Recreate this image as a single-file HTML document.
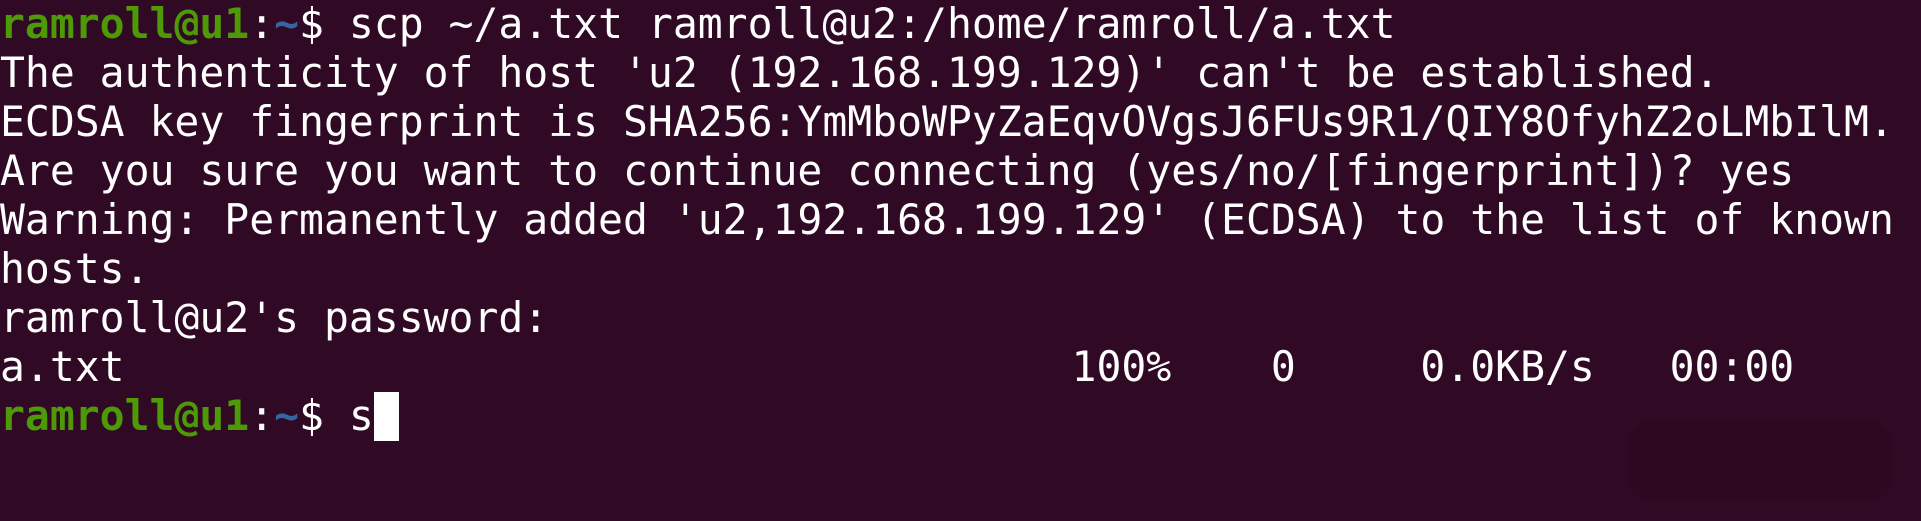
<!DOCTYPE html>
<html><head><meta charset="utf-8"><style>
html,body{margin:0;padding:0;background:#300a24;width:1921px;height:521px;overflow:hidden}
pre{margin:0;padding:0;font-family:"DejaVu Sans Mono","Liberation Mono",monospace;font-size:41.4px;line-height:49px;color:#ffffff;white-space:pre}
.g{color:#4e9a06;font-weight:bold}
.b{color:#3465a4;font-weight:bold}
.cur{display:inline-block;width:25px;height:49px;background:#fff;vertical-align:top}
.ghost{position:absolute;left:1627px;top:420px;width:266px;height:82px;border-radius:28px;background:#2c0920}
</style></head><body>
<div class="ghost"></div>
<pre><span class="g">ramroll@u1</span>:<span class="b">~</span>$ scp ~/a.txt ramroll@u2:/home/ramroll/a.txt
The authenticity of host 'u2 (192.168.199.129)' can't be established.
ECDSA key fingerprint is SHA256:YmMboWPyZaEqvOVgsJ6FUs9R1/QIY8OfyhZ2oLMbIlM.
Are you sure you want to continue connecting (yes/no/[fingerprint])? yes
Warning: Permanently added 'u2,192.168.199.129' (ECDSA) to the list of known
hosts.
ramroll@u2's password: 
a.txt                                      100%    0     0.0KB/s   00:00    
<span class="g">ramroll@u1</span>:<span class="b">~</span>$ s<span class="cur"></span></pre>
</body></html>
